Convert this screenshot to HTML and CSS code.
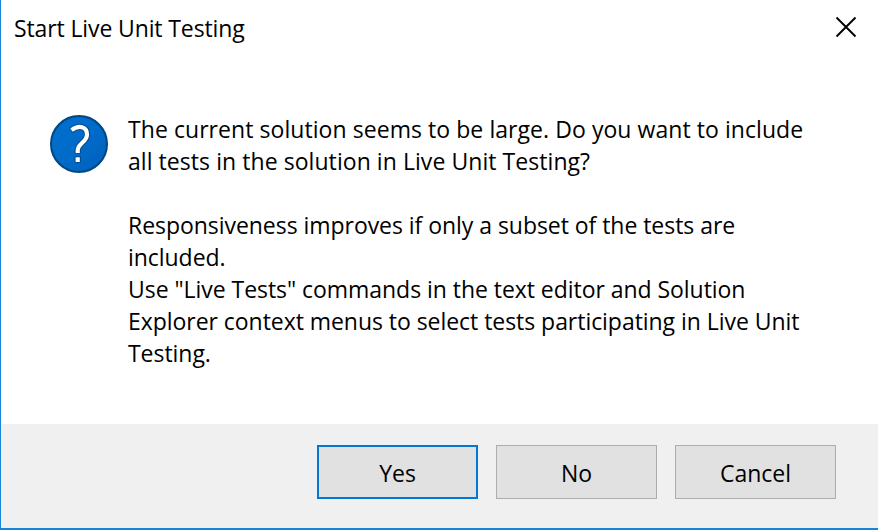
FILE: index.html
```html
<!DOCTYPE html>
<html lang="en">
<head>
<meta charset="utf-8">
<title>Start Live Unit Testing</title>
<link rel="stylesheet" href="styles.css">
</head>
<body>
<div class="dialog">
  <header class="titlebar">
    <span class="title">Start Live Unit Testing</span>
    <svg class="close" width="22" height="22" viewBox="0 0 22 22"><path d="M1.5 1.5l19 19M20.5 1.5l-19 19"/></svg>
  </header>
  <main class="content">
    <svg class="question" width="60" height="60" viewBox="0 0 60 60">
      <defs><linearGradient id="disc" x2="1" y2="1"><stop stop-color="#0070d0"/><stop offset=".5" stop-color="#006bc9"/><stop offset="1" stop-color="#0060bc"/></linearGradient></defs>
      <circle class="disc" cx="30" cy="30" r="28"/>
      <path class="edge" d="M22 16.400C30 10.500 38 12.500 38 20.500C38 28.500 28.700 29 28.700 36.500V39.500M28.700 42.300V48.700"/>
      <path class="mark" d="M22.500 16.100C30 10.500 38 12.500 38 20.500C38 28.500 28.700 29 28.700 36.500V39M28.700 43.200V47.900"/>
    </svg>
    <div class="message">
      <p class="prompt">The current solution seems to be large. Do you want to include<br>all tests in the solution in Live Unit Testing?</p>
      <p class="details">Responsiveness improves if only a subset of the tests are<br>included.<br>Use "Live Tests" commands in the text editor and Solution<br>Explorer context menus to select tests participating in Live Unit<br>Testing.</p>
    </div>
  </main>
  <footer class="actions">
    <button class="primary">Yes</button><button>No</button><button>Cancel</button>
  </footer>
</div>
</body>
</html>
```
FILE: styles.css
```css
* { box-sizing: border-box; }
body { margin: 0; font-family: "Open Sans", sans-serif; font-size: 23px; color: #000; }
.dialog { width: 878px; height: 530px; display: flex; flex-direction: column; border-left: 1px solid #1883d7; border-bottom: 2px solid #1883d7; background: #fff; }
.titlebar { height: 114px; display: flex; justify-content: space-between; padding: 9px 21px 0 13px; }
.title { line-height: 38px; letter-spacing: -.12px; }
.close { margin-top: 7px; fill: none; stroke: #000; stroke-width: 1.9; }
.content { flex: 1; display: flex; padding-left: 48px; gap: 19px; }
.disc { fill: url(#disc); stroke: #00487f; stroke-width: 2; }
.edge { fill: none; stroke: #004a8c; stroke-width: 6.2; }
.mark { fill: none; stroke: #fff; stroke-width: 4.2; }
.message { line-height: 32px; white-space: nowrap; margin-top: -1px; }
p { margin: 0 0 32px; }
.prompt { letter-spacing: .06px; }
.details { letter-spacing: -.045px; }
.actions { height: 104px; background: #f0f0f0; display: flex; gap: 18px; justify-content: flex-end; padding: 21px 42px 0 0; }
button { width: 161px; height: 54px; font: inherit; color: #000; background: #e1e1e1; border: 1px solid #adadad; padding: 2px 0 0; }
.primary { border: 2px solid #0078d7; }
```
